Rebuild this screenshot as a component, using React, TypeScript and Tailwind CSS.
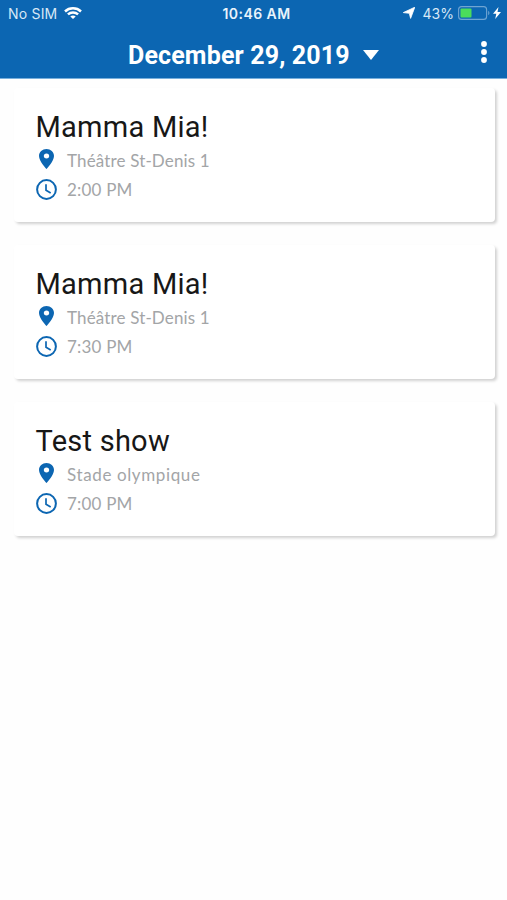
import React from "react";

type Show = { title: string; venue: string; time: string; venueTracking: string };

const shows: Show[] = [
  { title: "Mamma Mia!", venue: "Théâtre St-Denis 1", time: "2:00 PM", venueTracking: "tracking-[0.15px]" },
  { title: "Mamma Mia!", venue: "Théâtre St-Denis 1", time: "7:30 PM", venueTracking: "tracking-[0.15px]" },
  { title: "Test show", venue: "Stade olympique", time: "7:00 PM", venueTracking: "tracking-[0.62px]" },
];

function Pin() {
  return (
    <svg viewBox="5 2 14 20" className="h-[20px] w-[15px] fill-[#0c66b2]" preserveAspectRatio="none">
      <path d="M12 2C8.130 2 5 5.130 5 9c0 5.250 7 13 7 13s7-7.750 7-13c0-3.870-3.130-7-7-7zm0 9.500a2.500 2.500 0 0 1 0-5 2.500 2.500 0 0 1 0 5z" />
    </svg>
  );
}

function Clock() {
  return (
    <svg viewBox="0 0 21 21" className="h-[21px] w-[21px]" fill="none" stroke="#0c66b2">
      <circle cx="10.500" cy="10.500" r="9.400" strokeWidth="2" />
      <path d="M10 5.200v6l4.700 2.800" strokeWidth="1.700" />
    </svg>
  );
}

function Wifi() {
  return (
    <svg viewBox="0 0 18 12" className="mb-[1px] h-[12px] w-[18px]" fill="none" stroke="white" strokeWidth="2.500">
      <path d="M1 4.500C5.400 .3 12.600 .3 17 4.500" />
      <path d="M3.900 7.400c2.900-2.600 7.300-2.600 10.200 0" />
      <path d="M9 12 6.300 9.500c1.500-1.400 3.900-1.400 5.400 0z" fill="white" stroke="none" />
    </svg>
  );
}

function Card({ show }: { show: Show }) {
  return (
    <article className="h-[134px] rounded-[4px] bg-white pt-[21px] pl-[21.500px] shadow-[2px_2px_3px_rgba(0,0,0,0.18)]">
      <h2 className="h-[36px] font-[Roboto,sans-serif] text-[29px] leading-[36px] tracking-[0.25px] whitespace-nowrap text-[#171717]">{show.title}</h2>
      <div className="flex h-[28px] items-center font-[Lato,sans-serif] text-[17px] text-[#a3a5a7]">
        <span className="flex w-[31.500px] pl-[3px]"><Pin /></span>
        <span className={`pt-[3px] ${show.venueTracking}`}>{show.venue}</span>
      </div>
      <div className="flex h-[32px] items-center font-[Lato,sans-serif] text-[17px] tracking-[0.2px] text-[#a3a5a7]">
        <span className="flex w-[31.500px]"><Clock /></span>
        <span className="pt-[1px]">{show.time}</span>
      </div>
    </article>
  );
}

export default function App() {
  return (
    <div className="h-[900px] w-[507px] overflow-hidden bg-[#fefefe]">
      <header className="h-[79px] border-b border-[#78afdc] bg-[#0c66b2] text-white">
        <div className="grid h-[27px] grid-cols-3 items-center px-[8px] font-[Inter,sans-serif] text-[14px]">
          <div className="flex items-center gap-[7px]">
            <span className="tracking-[0.2px] text-[#d7e8f6]">No SIM</span>
            <Wifi />
          </div>
          <div className="pl-[6px] text-center text-[14px] font-semibold tracking-[0.45px] text-[#e9f3fb]">10:46 AM</div>
          <div className="-mr-[3px] flex items-center justify-end">
            <svg viewBox="0 0 12 12" className="mr-[8px] mb-[1px] h-[12px] w-[12px] fill-white">
              <path d="M11.800 .2 7.600 11.400 6.300 6.300 .3 5.600z" stroke="white" strokeWidth=".8" />
            </svg>
            <span className="mr-[4px] text-[#d7e8f6]">43%</span>
            <svg viewBox="0 0 32 14" className="mr-[3px] mb-[1px] h-[14px] w-[32px]">
              <rect x=".6" y=".6" width="28" height="12.800" rx="3" fill="none" stroke="#6fa5d3" strokeWidth="1.100" />
              <rect x="2.500" y="2.500" width="11" height="9" rx="1" fill="#4bdc5b" />
              <path d="M30.200 4.800c1.700.7 1.700 3.700 0 4.400z" fill="#6fa5d3" />
            </svg>
            <svg viewBox="0 0 8 12" className="mr-[1px] mb-[1px] h-[12px] w-[8px] fill-white">
              <path d="M5.500 0 0 6.800h3.300L2.200 12 8 4.900H4.500z" />
            </svg>
          </div>
        </div>
        <div className="flex h-[51px] items-center pr-[20px] pl-[128px]">
          <h1 className="w-[222px] pt-[6px] font-[Roboto,sans-serif] text-[25px] font-bold tracking-[0.15px] whitespace-nowrap">December 29, 2019</h1>
          <svg viewBox="0 0 16 10" className="mt-[4px] ml-[13px] h-[10px] w-[16px] fill-white">
            <path d="M0 0h16L8 10z" />
          </svg>
          <svg viewBox="0 0 6 22" className="mb-[1px] ml-auto h-[22px] w-[6px] fill-white">
            <circle cx="3" cy="3" r="2.900" />
            <circle cx="3" cy="11" r="2.900" />
            <circle cx="3" cy="19" r="2.900" />
          </svg>
        </div>
      </header>
      <main className="flex flex-col gap-[23px] pt-[9px] pr-[12px] pl-[14px]">
        {shows.map((show, index) => (
          <Card key={index} show={show} />
        ))}
      </main>
    </div>
  );
}
